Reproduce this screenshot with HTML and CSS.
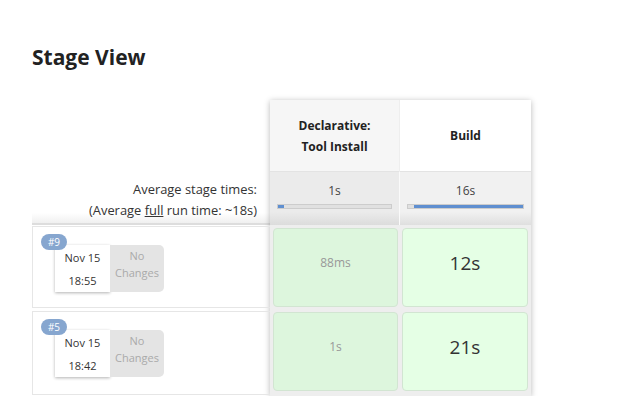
FILE: index.html
```html
<!DOCTYPE html>
<html>
<head>
<meta charset="utf-8">
<link rel="stylesheet" href="styles.css">
</head>
<body>
<div class="page">
  <h2 class="title">Stage View</h2>
  <div class="table">
    <div class="left">
      <div class="left-head"></div>
      <div class="avg-label">
        <div>Average stage times:</div>
        <div>(Average <u>full</u> run time: ~18s)</div>
      </div>
      <div class="run">
        <span class="badge">#9</span>
        <div class="date"><div>Nov 15</div><div>18:55</div></div>
        <div class="changes">No<br>Changes</div>
      </div>
      <div class="run run2">
        <span class="badge">#5</span>
        <div class="date"><div>Nov 15</div><div>18:42</div></div>
        <div class="changes">No<br>Changes</div>
      </div>
    </div>
    <div class="stages">
      <div class="head h1"><span>Declarative:<br>Tool Install</span></div>
      <div class="head h2"><span>Build</span></div>
      <div class="avg a1"><div class="avg-time">1s</div><div class="bar"><div class="fill" style="width:5%"></div></div></div>
      <div class="avg a2"><div class="avg-time">16s</div><div class="bar"><div class="fill fill-big" style="width:95%"></div></div></div>
      <div class="cell c1 r1"><span class="small">88ms</span></div>
      <div class="cell c2 r1"><span class="big">12s</span></div>
      <div class="cell c1 r2"><span class="small">1s</span></div>
      <div class="cell c2 r2"><span class="big">21s</span></div>
    </div>
  </div>
</div>
</body>
</html>
```
FILE: styles.css
```css
* { box-sizing: border-box; }
body {
  margin: 0;
  background: #fff;
  font-family: "Open Sans", "Noto Sans", sans-serif;
  color: #333;
}
.page {
  padding: 40px 0 0 32px;
}
.title {
  margin: 0;
  font-size: 21px;
  font-weight: 700;
  color: #222;
  line-height: 34px;
}
.table {
  display: flex;
  margin-top: 26px;
}
.left {
  width: 238px;
  display: flex;
  flex-direction: column;
}
.left-head { height: 73px; }
.avg-label {
  height: 52px;
  padding: 6px 13px 0 0;
  text-align: right;
  font-size: 12.9px;
  line-height: 21px;
  color: #333;
  background: linear-gradient(to bottom, #fff 0%, #fff 80%, #f0f0f0 100%);
  border-bottom: 2px solid #ddd;
}
.run {
  position: relative;
  height: 82px;
  margin-top: 1px;
  border: 1px solid #e6e6e6;
  border-right: none;
  display: flex;
  align-items: flex-start;
  padding: 18px 0 0 22px;
}
.run2 { margin-top: 3px; height: 84px; }
.badge {
  position: absolute;
  left: 8px;
  top: 7px;
  width: 26px;
  height: 16px;
  border-radius: 8px;
  background: #86a6cf;
  color: #fff;
  font-size: 10px;
  line-height: 16px;
  text-align: center;
  z-index: 1;
}
.date {
  width: 55px;
  height: 47px;
  background: #fff;
  box-shadow: 0 1px 3px rgba(0,0,0,0.3);
  font-size: 11px;
  line-height: 23px;
  text-align: center;
  color: #333;
  padding-top: 1px;
}
.changes {
  width: 54px;
  height: 47px;
  background: #e4e4e4;
  border-radius: 0 5px 5px 0;
  color: #aaa;
  font-size: 11px;
  line-height: 17px;
  text-align: center;
  padding-top: 2px;
}
.stages {
  display: grid;
  grid-template-columns: 130px 131px;
  grid-template-rows: 71px 54px 84px 84px;
  box-shadow: 0 1px 6px rgba(0,0,0,0.28);
  background: #eee;
  width: 261px;
  height: 296px;
}
.head {
  display: flex;
  align-items: center;
  justify-content: center;
  text-align: center;
  font-size: 12px;
  font-weight: 700;
  line-height: 21px;
  color: #222;
}
.h1 { background: #f6f6f6; border-right: 1px solid #eee; }
.h2 { background: #fff; }
.avg {
  padding: 9px 7px 0 7px;
  text-align: center;
  font-size: 12px;
  color: #444;
  border-top: 1px solid #e3e3e3;
}
.a1 { background: linear-gradient(to bottom, #ebebeb 75%, #dcdcdc 100%); border-right: 1px solid #fafafa; }
.a2 { background: linear-gradient(to bottom, #f1f1f1 75%, #dfdfdf 100%); }
.avg-time { line-height: 20px; }
.bar {
  margin-top: 3px;
  height: 5px;
  background: #e0e0e0;
  border: 1px solid #ccc;
}
.fill {
  height: 100%;
  background: #5f8fd0;
}
.fill-big { margin-left: auto; }
.cell {
  margin: 3px 2px 2px 3px;
  border: 1px solid #d2e5d2;
  border-radius: 4px;
  text-align: center;
}
.c1 { background: #ddf6dd; }
.c2 { background: #e5ffe5; margin-left: 2px; margin-right: 3px; }
.small {
  display: block;
  padding-top: 25px;
  font-size: 12px;
  color: #999;
}
.big {
  display: block;
  padding-top: 21px;
  font-size: 19px;
  color: #333;
}
```
